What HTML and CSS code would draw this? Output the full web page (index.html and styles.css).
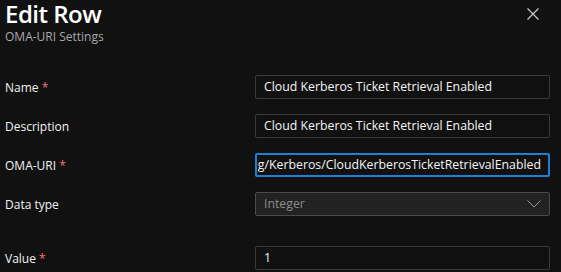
FILE: index.html
```html
<html>
  <head>
    <title>Edit Row</title>
    <link rel="stylesheet" href="styles.css">
  </head>
  <body>
    <div id="panel">
      <div class="header">
        <div class="titles">
          <h1 class="title">Edit Row</h1>
          <p class="subtitle">OMA-URI Settings</p>
        </div>
        <span class="close">
          <svg width="12" height="12" viewBox="0 0 12 12"><path d="M0.5 0.5 L11.5 11.5 M11.5 0.5 L0.5 11.5" stroke="#cfcfcf" stroke-width="1.1" fill="none"/></svg>
        </span>
      </div>
      <div class="form">
        <div class="row">
          <label class="label">Name <span class="req">*</span></label>
          <div class="field">Cloud Kerberos Ticket Retrieval Enabled</div>
        </div>
        <div class="row">
          <label class="label">Description</label>
          <div class="field">Cloud Kerberos Ticket Retrieval Enabled</div>
        </div>
        <div class="row">
          <label class="label">OMA-URI <span class="req">*</span></label>
          <div class="field focused"><span class="scroll">./Device/Vendor/MSFT/Policy/Config/Kerberos/CloudKerberosTicketRetrievalEnabled</span></div>
        </div>
        <div class="row spaced">
          <label class="label">Data type</label>
          <div class="field select">
            <span>Integer</span>
            <svg width="14" height="8" viewBox="0 0 14 8"><path d="M0.5 0.5 L7 7 L13.5 0.5" stroke="#9a9a9a" stroke-width="1" fill="none"/></svg>
          </div>
        </div>
        <div class="row">
          <label class="label">Value <span class="req">*</span></label>
          <div class="field">1</div>
        </div>
      </div>
    </div>
  </body>
</html>
```

FILE: styles.css
```css
body {
  margin: 0;
  background-color: #111111;
  font-family: "Open Sans", "Noto Sans", sans-serif;
  color: #f0f0f0;
  overflow: hidden;
}
#panel {
  padding: 0 11px 0 5px;
}
.header {
  display: flex;
  justify-content: space-between;
  align-items: flex-start;
  height: 75px;
}
.title {
  margin: 0;
  font-size: 24px;
  font-weight: 600;
  line-height: 28px;
  letter-spacing: -0.5px;
  color: #ffffff;
}
.subtitle {
  margin: 1px 0 0;
  font-size: 12px;
  line-height: 16px;
  color: #a8a8a8;
}
.close {
  margin: 8px 11px 0 0;
  line-height: 0;
}
.form {
  display: flex;
  flex-direction: column;
  gap: 15px;
}
.row {
  display: grid;
  grid-template-columns: 250px 1fr;
  align-items: center;
}
.row.spaced {
  margin-bottom: 15px;
}
.label {
  font-size: 12px;
  color: #f2f2f2;
}
.req {
  color: #f1707b;
}
.field {
  height: 22px;
  border: 1px solid #3a3a3a;
  border-radius: 2px;
  padding: 0 8px;
  font-size: 12.3px;
  line-height: 22px;
  color: #f5f5f5;
  white-space: nowrap;
  overflow: hidden;
}
.field.focused {
  height: 20px;
  line-height: 20px;
  border: 2px solid #1f7fd4;
  padding: 0 7px;
  display: flex;
  justify-content: flex-end;
}
.scroll {
  flex-shrink: 0;
}
.field.select {
  background-color: #222222;
  border-color: #4a4a4a;
  color: #8c8c8c;
  display: flex;
  justify-content: space-between;
  align-items: center;
}
```
